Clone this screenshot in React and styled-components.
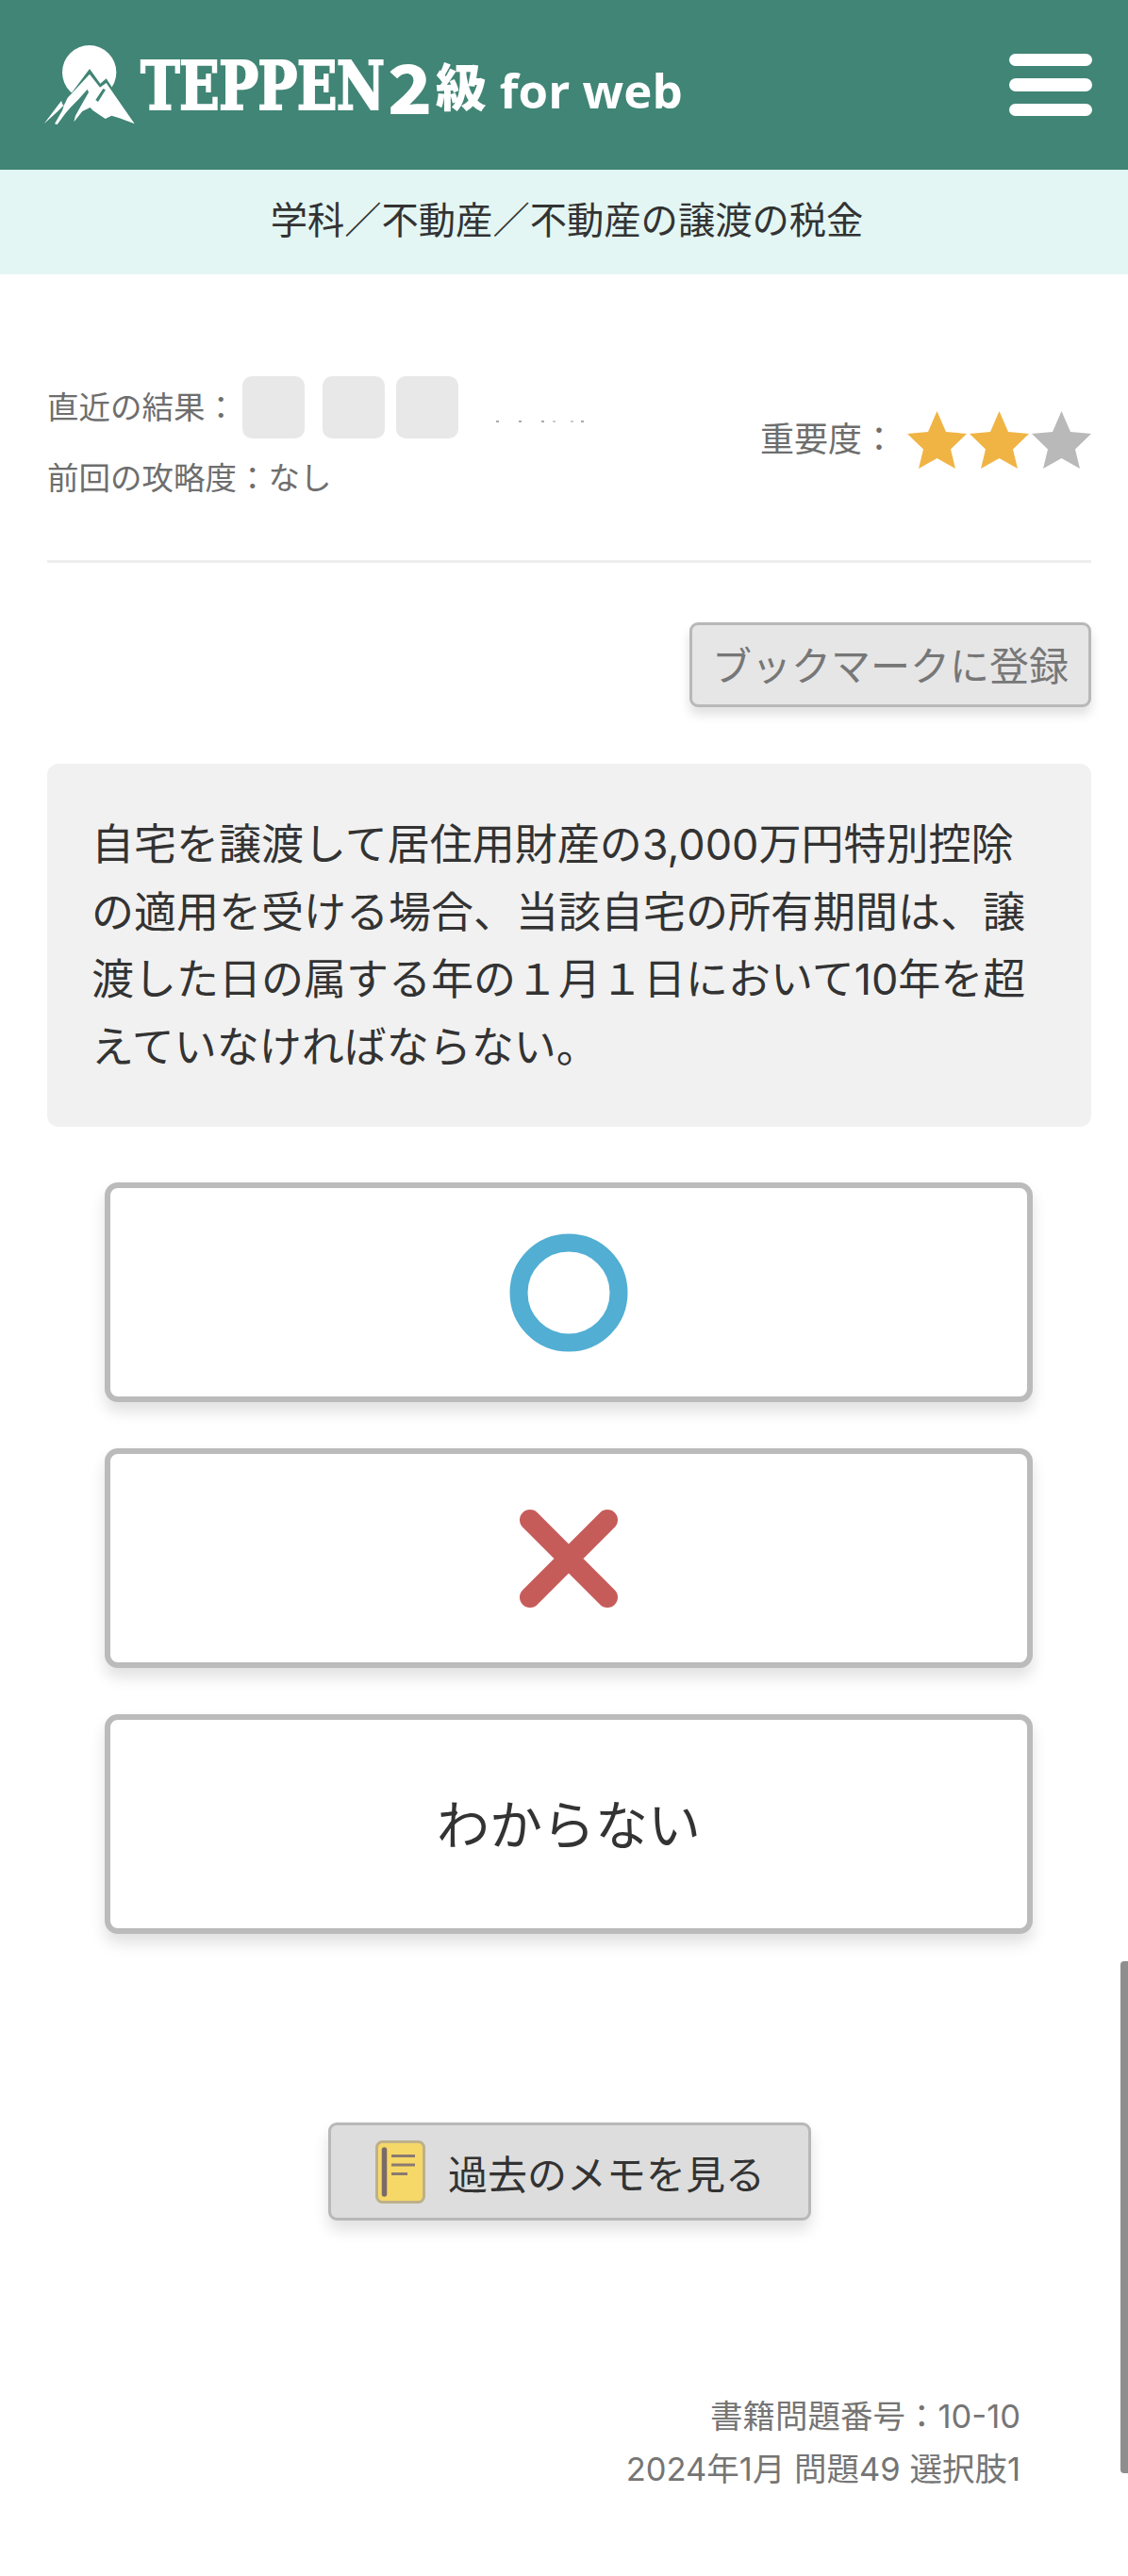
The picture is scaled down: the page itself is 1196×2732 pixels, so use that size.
import React from "react";
import styled, { createGlobalStyle } from "styled-components";

const GlobalStyle = createGlobalStyle`
  html, body {
    margin: 0;
    padding: 0;
    background: #fff;
  }
  body {
    font-family: "Inter", "Noto Sans CJK JP", sans-serif;
    color: #333;
  }
  * {
    box-sizing: border-box;
  }
`;

const Page = styled.div`
  position: relative;
  width: 1196px;
  min-height: 2732px;
  background: #fff;
`;

const Header = styled.header`
  display: flex;
  align-items: center;
  justify-content: space-between;
  height: 180px;
  padding: 0 38px 0 46px;
  background: #408575;
`;

const Logo = styled.div`
  display: flex;
  align-items: center;
  color: #fff;
  white-space: nowrap;
`;

const LogoMark = styled.svg`
  display: block;
  width: 98px;
  height: 84px;
  margin-right: 5px;
`;

const LogoWord = styled.span`
  display: block;
  width: 253px;
  margin-top: 2px;
  font-family: "DejaVu Serif", serif;
  font-size: 71px;
  font-weight: 700;
  line-height: 80px;
  letter-spacing: -1px;
  transform: scaleX(0.79);
  transform-origin: left center;
  -webkit-text-stroke: 2px #fff;
`;

const LogoGrade = styled.span`
  display: block;
  margin-left: 9px;
  font-family: "Noto Sans CJK JP", sans-serif;
  font-size: 72px;
  font-weight: 900;
  line-height: 80px;
  transform: scaleX(1.08);
  transform-origin: left center;
`;

const LogoKyu = styled.span`
  display: block;
  margin-left: 7px;
  font-family: "Noto Sans CJK JP", sans-serif;
  font-size: 54px;
  font-weight: 900;
  line-height: 80px;
`;

const LogoSuffix = styled.span`
  display: block;
  margin: 10px 0 0 14px;
  font-family: "Open Sans", sans-serif;
  font-size: 51px;
  font-weight: 700;
  line-height: 80px;
`;

const MenuButton = styled.div`
  display: flex;
  flex-direction: column;
  gap: 13px;
  width: 88px;
`;

const MenuBar = styled.span`
  display: block;
  height: 13.5px;
  border-radius: 7px;
  background: #fff;
`;

const Crumb = styled.div`
  height: 111px;
  padding-left: 6px;
  background: #e3f6f3;
  font-size: 39.3px;
  line-height: 108px;
  text-align: center;
  color: #333;
`;

const Main = styled.main`
  padding: 108px 39px 0 50px;
`;

const Meta = styled.section`
  display: flex;
  align-items: center;
  justify-content: space-between;
  padding-bottom: 67px;
  border-bottom: 3px solid #eee;
  color: #6e6e6e;
`;

const MetaLeft = styled.div`
  display: flex;
  flex-direction: column;
  gap: 20px;
`;

const ResultRow = styled.div`
  display: flex;
  align-items: center;
  font-size: 33.5px;
  line-height: 66px;
`;

const ResultBox = styled.span`
  display: block;
  width: 66px;
  height: 66px;
  margin-left: ${(p) => p.$gap}px;
  border-radius: 10px;
  background: #e8e8e8;
`;

const ResultDots = styled.svg`
  display: block;
  width: 100px;
  height: 4px;
  margin: 30px 0 0 37px;
`;

const MetaLine = styled.div`
  padding-top: 2px;
  font-size: 33.5px;
  line-height: 40px;
`;

const Importance = styled.div`
  display: flex;
  align-items: center;
  margin-top: 6px;
  font-size: 36px;
  line-height: 57px;
`;

const Stars = styled.div`
  display: flex;
  gap: 3px;
  margin-left: 12px;
`;

const StarIcon = styled.svg`
  display: block;
  width: 63px;
  height: 61px;
  fill: ${(p) => (p.$on ? "#f0b445" : "#b9b9b9")};
`;

const BookmarkRow = styled.div`
  display: flex;
  justify-content: flex-end;
  margin-top: 63px;
`;

const BookmarkButton = styled.div`
  width: 426px;
  height: 90px;
  border: 3px solid #b8b8b8;
  border-radius: 9px;
  background: #e6e6e6;
  box-shadow: 0 8px 12px rgba(0, 0, 0, 0.12);
  color: #777;
  font-size: 42px;
  line-height: 88px;
  text-align: center;
`;

const Question = styled.div`
  height: 385px;
  margin-top: 60px;
  padding: 50px 48px 0 47px;
  border-radius: 12px;
  background: #f1f1f1;
  color: #333;
  font-size: 45px;
  line-height: 71.5px;
`;

const Choices = styled.div`
  display: flex;
  flex-direction: column;
  gap: 49px;
  margin: 59px 62px 0 61px;
`;

const Choice = styled.div`
  display: flex;
  align-items: center;
  justify-content: center;
  height: 233px;
  padding-bottom: ${(p) => (p.$text ? 6 : 0)}px;
  border: 6px solid #bbb;
  border-radius: 14px;
  background: #fff;
  box-shadow: 0 10px 16px rgba(0, 0, 0, 0.12);
  color: #333;
  font-size: 56px;
`;

const ChoiceIcon = styled.svg`
  display: block;
  width: 126px;
  height: 126px;
  fill: none;
`;

const MemoRow = styled.div`
  display: flex;
  justify-content: center;
  margin-top: 200px;
  padding-left: 1px;
`;

const MemoButton = styled.div`
  display: flex;
  align-items: center;
  gap: 24px;
  width: 512px;
  height: 104px;
  padding-left: 47px;
  border: 3px solid #b8b8b8;
  border-radius: 9px;
  background: #ddd;
  box-shadow: 0 10px 16px rgba(0, 0, 0, 0.12);
  color: #333;
  font-size: 42px;
`;

const MemoIcon = styled.svg`
  display: block;
  width: 53px;
  height: 67px;
`;

const SourceInfo = styled.div`
  margin: 180px 75px 0 0;
  color: #757575;
  font-size: 34.5px;
  line-height: 56px;
  text-align: right;
`;

const ScrollThumb = styled.div`
  position: absolute;
  top: 2080px;
  right: 0;
  width: 8px;
  height: 543px;
  border-radius: 4px 0 0 4px;
  background: #8e8e8e;
`;

const STAR_POINTS = "31.5,0 41,22 63,24 46,40.5 51,61 31.5,50 12,61 17,40.5 0,24 22,22";

function Star({ on }) {
  return (
    <StarIcon $on={on} viewBox="0 0 63 61">
      <polygon points={STAR_POINTS} />
    </StarIcon>
  );
}

function MountainLogo() {
  return (
    <LogoMark viewBox="48 38 294 252">
      <circle cx="194" cy="124" r="86" fill="#fff" />
      <polygon points="30,310 118,192 130,200 195,113 229,160 248,144 350,300" fill="#408575" />
      <polygon
        fill="#fff"
        points="50,288 105,215 112,232 125,205 195,130 228,172 248,158 338,288 290,270 265,262 245,272 205,245 197,236 172,248 145,282 150,262 165,235 178,212 192,188 188,178 160,210 135,235 118,255 92,290 84,288 108,246 114,228 94,248"
      />
      <polygon fill="#408575" points="246,180 222,218 214,212 238,176" />
    </LogoMark>
  );
}

function MemoGlyph() {
  return (
    <MemoIcon viewBox="0 0 53 67">
      <rect x="1.5" y="1.5" width="50" height="64" rx="6" fill="#f6d868" stroke="#bdb08a" strokeWidth="3" />
      <line x1="9.5" y1="10" x2="9.5" y2="57" stroke="#7a6a6a" strokeWidth="5.5" strokeLinecap="round" />
      <line x1="17" y1="16.5" x2="42" y2="16.5" stroke="#8a7a70" strokeWidth="3" />
      <line x1="17" y1="26" x2="42" y2="26" stroke="#8a7a70" strokeWidth="3" />
      <line x1="17" y1="35.5" x2="34" y2="35.5" stroke="#8a7a70" strokeWidth="3" />
    </MemoIcon>
  );
}

export default function App() {
  return (
    <Page>
      <GlobalStyle />
      <Header>
        <Logo>
          <MountainLogo />
          <LogoWord>TEPPEN</LogoWord>
          <LogoGrade>2</LogoGrade>
          <LogoKyu>級</LogoKyu>
          <LogoSuffix>for web</LogoSuffix>
        </Logo>
        <MenuButton>
          <MenuBar />
          <MenuBar />
          <MenuBar />
        </MenuButton>
      </Header>
      <Crumb>学科／不動産／不動産の譲渡の税金</Crumb>
      <Main>
        <Meta>
          <MetaLeft>
            <ResultRow>
              直近の結果：
              <ResultBox $gap={6} />
              <ResultBox $gap={19} />
              <ResultBox $gap={12} />
              <ResultDots viewBox="0 0 100 4">
                <g fill="#aaa">
                  <rect x="3" y="1" width="3" height="2" />
                  <rect x="27" y="1" width="3" height="2" />
                  <rect x="51" y="1" width="3" height="2" />
                  <rect x="63" y="1" width="3" height="2" fill="#ccc" />
                  <rect x="82" y="1" width="3" height="2" fill="#ccc" />
                  <rect x="93" y="1" width="3" height="2" />
                </g>
              </ResultDots>
            </ResultRow>
            <MetaLine>前回の攻略度：なし</MetaLine>
          </MetaLeft>
          <Importance>
            重要度：
            <Stars>
              <Star on />
              <Star on />
              <Star />
            </Stars>
          </Importance>
        </Meta>
        <BookmarkRow>
          <BookmarkButton>ブックマークに登録</BookmarkButton>
        </BookmarkRow>
        <Question>
          自宅を譲渡して居住用財産の3,000万円特別控除の適用を受ける場合、当該自宅の所有期間は、譲渡した日の属する年の１月１日において10年を超えていなければならない。
        </Question>
        <Choices>
          <Choice>
            <ChoiceIcon viewBox="0 0 126 126">
              <circle cx="63" cy="63" r="53" stroke="#52aed3" strokeWidth="19" />
            </ChoiceIcon>
          </Choice>
          <Choice>
            <ChoiceIcon viewBox="0 0 126 126">
              <path d="M22 22 L104 104 M104 22 L22 104" stroke="#c65c5a" strokeWidth="22" strokeLinecap="round" />
            </ChoiceIcon>
          </Choice>
          <Choice $text>わからない</Choice>
        </Choices>
        <MemoRow>
          <MemoButton>
            <MemoGlyph />
            過去のメモを見る
          </MemoButton>
        </MemoRow>
        <SourceInfo>
          書籍問題番号：10-10
          <br />
          2024年1月 問題49 選択肢1
        </SourceInfo>
      </Main>
      <ScrollThumb />
    </Page>
  );
}
